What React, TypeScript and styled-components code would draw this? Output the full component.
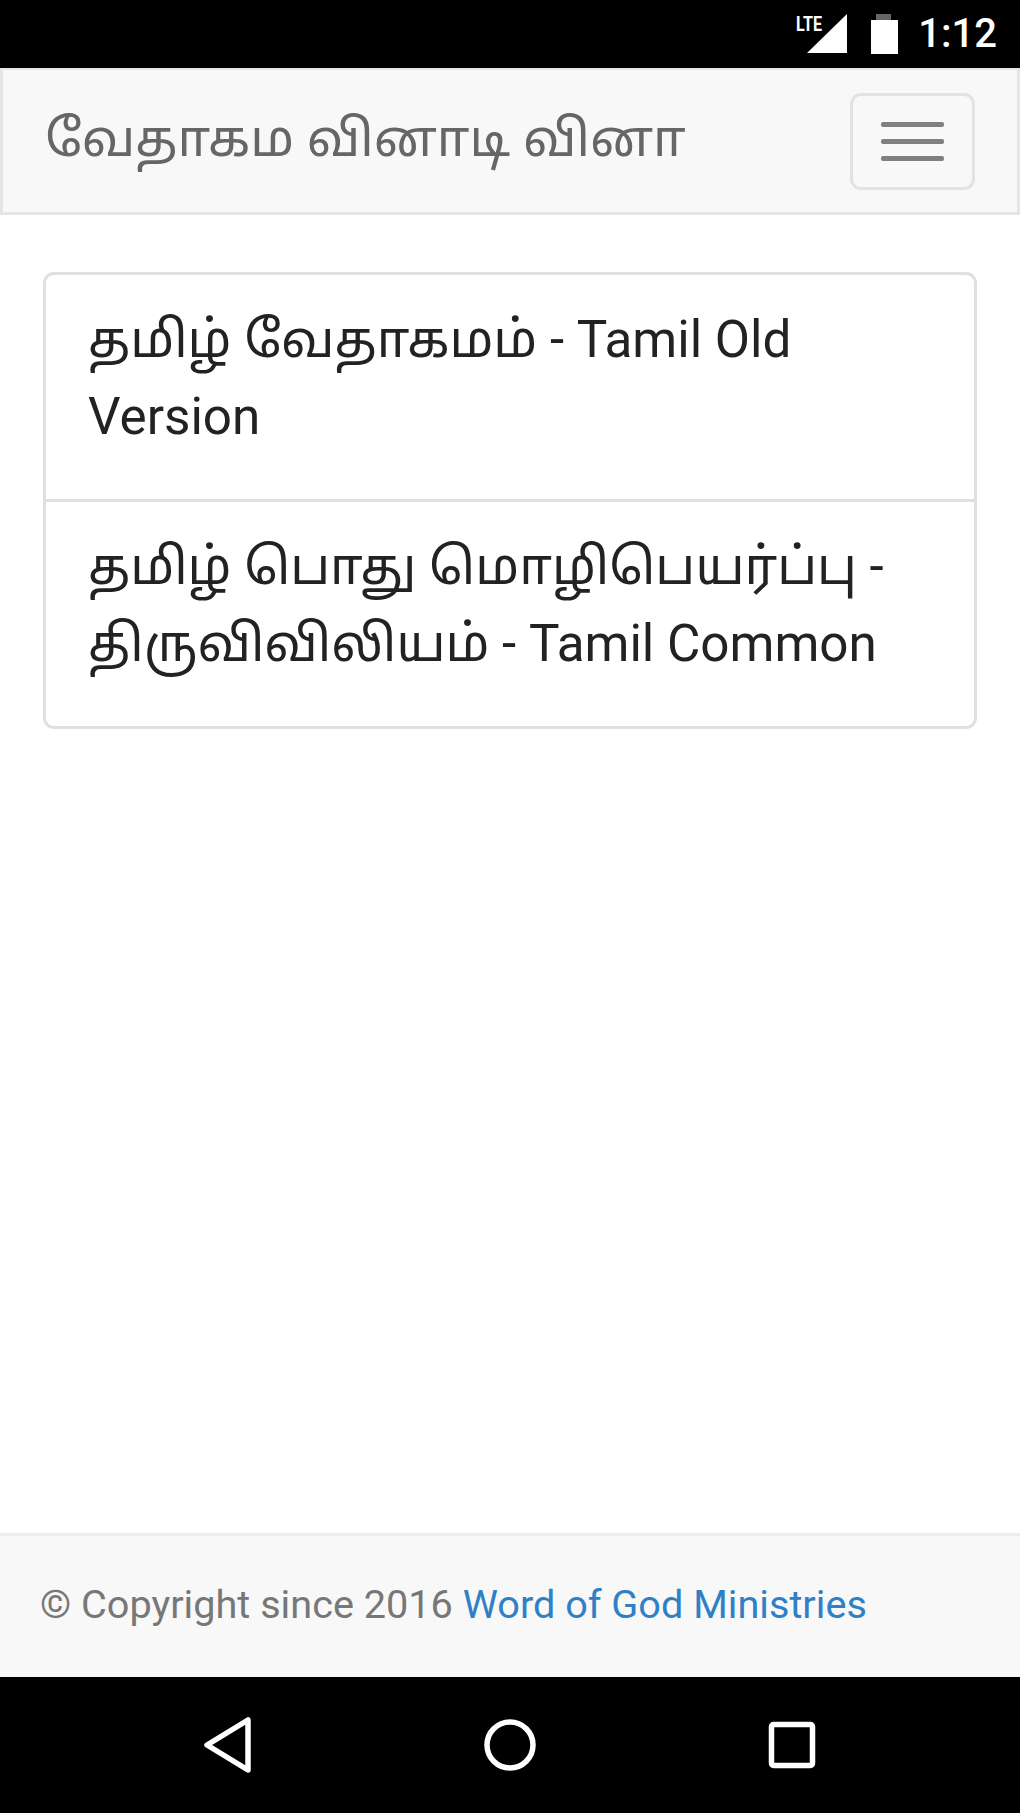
import React from 'react'
import styled, { createGlobalStyle } from 'styled-components'

const GlobalStyle = createGlobalStyle`
    html, body {
        margin: 0;
        padding: 0;
        background: #fff;
    }
    * {
        box-sizing: border-box;
    }
`

const Screen = styled.div`
    width: 1020px;
    height: 1813px;
    display: flex;
    flex-direction: column;
    font-family: Roboto, "Noto Sans", "Noto Sans Tamil", "Liberation Sans", sans-serif;
    overflow: hidden;
`

const StatusBar = styled.div`
    height: 68px;
    flex: none;
    background: #000;
    display: flex;
    align-items: center;
    justify-content: flex-end;
    padding: 0 23px 0 0;
    color: #fff;
`

const StatusIcons = styled.svg`
    width: 106px;
    height: 68px;
    margin-right: 16px;
`

const Clock = styled.div`
    font-size: 40px;
    line-height: 68px;
    font-weight: 500;
`

const Navbar = styled.nav`
    height: 147px;
    flex: none;
    background: #f8f8f8;
    border: 3px solid #e5e5e5;
    border-top-width: 2px;
    display: flex;
    align-items: center;
    justify-content: space-between;
    padding: 0 42px 0 42px;
`

const Brand = styled.div`
    font-size: 51.2px;
    color: #666;
    white-space: nowrap;
`

const Toggle = styled.button`
    width: 125px;
    height: 97px;
    background: transparent;
    border: 3px solid #e2e2e2;
    border-radius: 11px;
    padding: 0;
    display: flex;
    flex-direction: column;
    align-items: center;
    justify-content: center;
    gap: 12px;
`

const ToggleBar = styled.span`
    display: block;
    width: 63px;
    height: 5px;
    background: #808080;
    border-radius: 2px;
`

const Main = styled.main`
    flex: 1;
    padding: 57px 43px 0;
`

const List = styled.div`
    border: 3px solid #e0e0e0;
    border-radius: 11px;
    background: #fff;
`

const ListItem = styled.div`
    height: 224px;
    padding: 27px 42px;
    font-size: 51.2px;
    line-height: 76.5px;
    color: #222;

    & + & {
        height: 227px;
        border-top: 3px solid #e0e0e0;
    }
`

const Footer = styled.footer`
    height: 144px;
    flex: none;
    background: #f8f8f8;
    border-top: 3px solid #eee;
    display: flex;
    align-items: center;
    padding: 0 40px 4px;
    font-size: 39.65px;
    color: #777;
    white-space: pre;
`

const FooterLink = styled.a`
    color: #2f80c6;
    text-decoration: none;
`

const NavigationBar = styled.div`
    height: 136px;
    flex: none;
    background: #000;
    display: flex;
    align-items: center;
    justify-content: center;
    gap: 222px;
`

const NavIcon = styled.svg`
    width: 60px;
    height: 60px;
    fill: none;
    stroke: #fff;
    stroke-width: 5.5;
    stroke-linejoin: round;
`

export default function App() {
    return (
        <Screen>
            <GlobalStyle />
            <StatusBar>
                <StatusIcons viewBox="0 0 106 68">
                    <text x="0" y="30.5" fill="#fff" fontSize="21" fontWeight="700" fontFamily="Roboto, sans-serif" textLength="26" lengthAdjust="spacingAndGlyphs">LTE</text>
                    <polygon points="11,53 51,53 51,14" fill="#fff" />
                    <rect x="80" y="14" width="15" height="7" fill="#666" />
                    <rect x="75" y="20" width="27" height="34" fill="#fff" />
                </StatusIcons>
                <Clock>1:12</Clock>
            </StatusBar>
            <Navbar>
                <Brand>வேதாகம வினாடி வினா</Brand>
                <Toggle aria-label="menu">
                    <ToggleBar />
                    <ToggleBar />
                    <ToggleBar />
                </Toggle>
            </Navbar>
            <Main>
                <List>
                    <ListItem>தமிழ் வேதாகமம் - Tamil Old Version</ListItem>
                    <ListItem>தமிழ் பொது மொழிபெயர்ப்பு - திருவிவிலியம் - Tamil Common</ListItem>
                </List>
            </Main>
            <Footer>
                © Copyright since 2016 <FooterLink href="#">Word of God Ministries</FooterLink>
            </Footer>
            <NavigationBar>
                <NavIcon viewBox="0 0 60 60">
                    <polygon points="9,30 50,5 50,55" />
                </NavIcon>
                <NavIcon viewBox="0 0 60 60">
                    <circle cx="30" cy="30" r="23" />
                </NavIcon>
                <NavIcon viewBox="0 0 60 60">
                    <rect x="9.5" y="9.5" width="41" height="41" rx="2" />
                </NavIcon>
            </NavigationBar>
        </Screen>
    )
}
